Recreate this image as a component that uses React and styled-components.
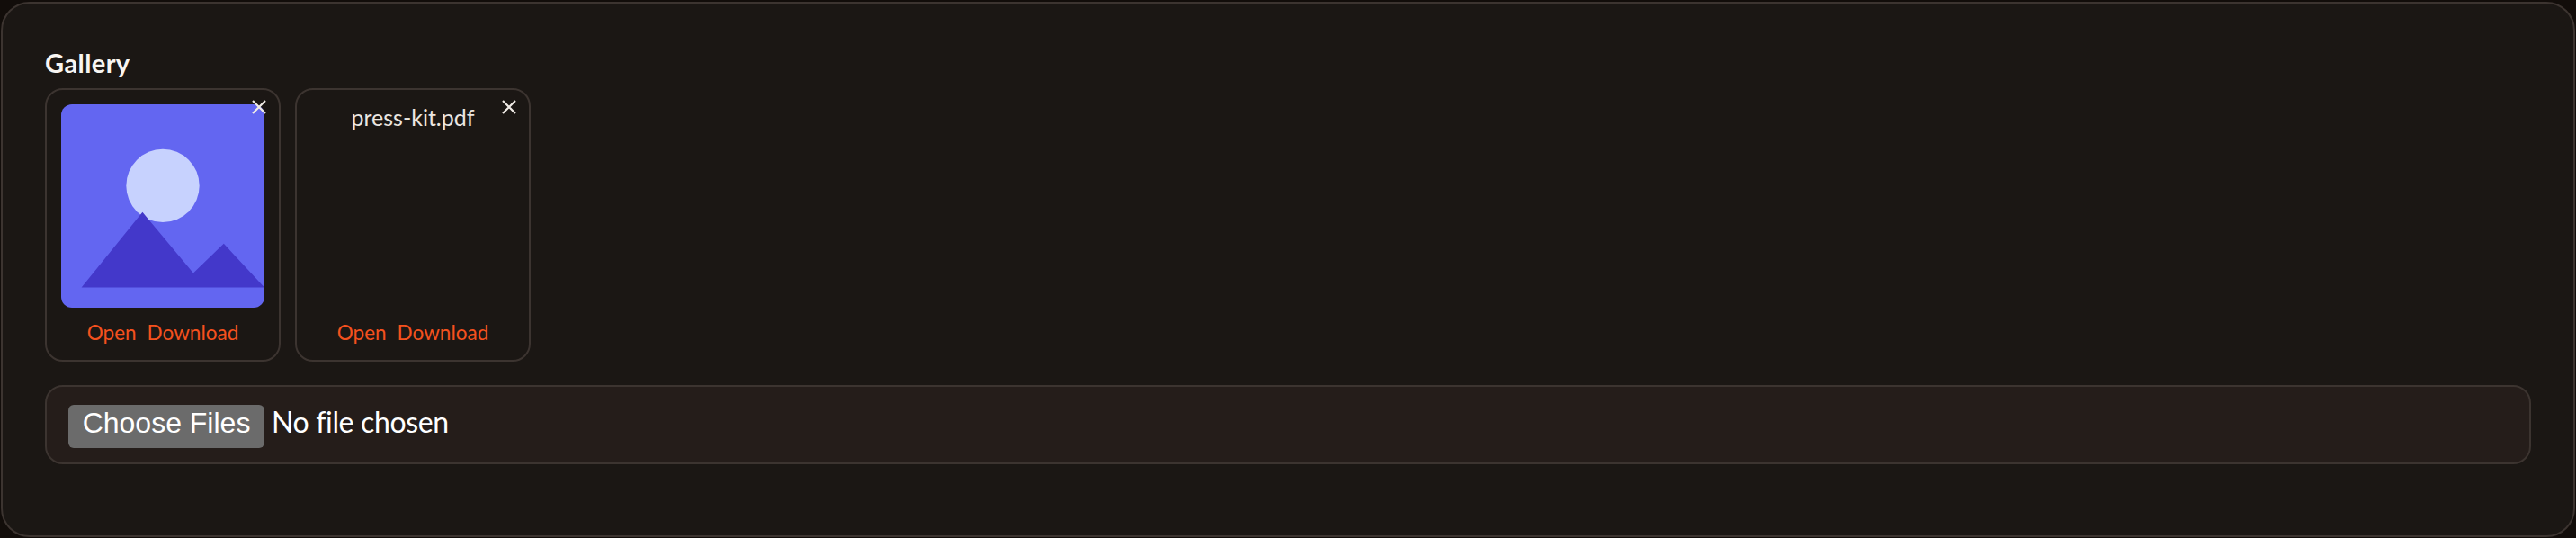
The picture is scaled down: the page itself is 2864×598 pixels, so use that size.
import React from "react";
import styled, { createGlobalStyle } from "styled-components";

const GlobalStyle = createGlobalStyle`
  html, body {
    margin: 0;
    padding: 0;
    background: #120d0a;
  }
  body {
    font-family: "Lato", "Liberation Sans", sans-serif;
  }
`;

const Page = styled.div`
  box-sizing: border-box;
  width: 2864px;
  height: 598px;
  padding: 2px 1px 1px;
`;

const Card = styled.section`
  box-sizing: border-box;
  height: 100%;
  padding: 48px 47px 0;
  background: #1b1714;
  border: 2px solid #3c3430;
  border-radius: 32px;
`;

const Title = styled.h2`
  margin: 0 0 10px;
  font-size: 29px;
  line-height: 36px;
  font-weight: 700;
  letter-spacing: 0.4px;
  color: #f8f5f2;
`;

const Tiles = styled.div`
  display: flex;
  gap: 16px;
`;

const Tile = styled.div`
  position: relative;
  box-sizing: border-box;
  width: 262px;
  height: 304px;
  padding: 16px;
  display: flex;
  flex-direction: column;
  align-items: center;
  border: 2px solid #3c3430;
  border-radius: 20px;
`;

const Thumb = styled.svg`
  display: block;
  width: 226px;
  height: 226px;
  border-radius: 12px;
`;

const FileName = styled.div`
  font-size: 25px;
  line-height: 28px;
  color: #ebe6e1;
`;

const Actions = styled.div`
  margin-top: auto;
  display: flex;
  gap: 12px;
  line-height: 28px;
`;

const ActionLink = styled.a`
  font-size: 22.5px;
  color: #f4511e;
  text-decoration: none;
`;

const CloseButton = styled.button`
  position: absolute;
  top: 10px;
  right: 13px;
  width: 18px;
  height: 18px;
  padding: 0;
  border: none;
  background: transparent;
  color: #f0ebe6;
  cursor: pointer;

  svg {
    display: block;
  }
`;

const UploadBox = styled.div`
  box-sizing: border-box;
  margin-top: 26px;
  height: 88px;
  padding: 15px 24px 18px;
  background: #251d1a;
  border: 2px solid #3c3430;
  border-radius: 20px;
`;

const FileInput = styled.input`
  display: block;
  font-family: "Lato", "Liberation Sans", sans-serif;
  font-size: 32px;
  line-height: 48px;
  letter-spacing: -0.35px;
  color: #ffffff;

  &::file-selector-button {
    box-sizing: border-box;
    height: 48px;
    width: 218px;
    margin-right: 8px;
    padding: 0 0 6px;
    border: none;
    border-radius: 6px;
    background: #6b6b6b;
    color: #ffffff;
    font-family: "Liberation Sans", sans-serif;
    font-size: 32px;
    letter-spacing: 0;
  }
`;

const CloseIcon = () => (
  <svg width="18" height="18" viewBox="0 0 18 18" fill="none" stroke="currentColor" strokeWidth="2.2">
    <path d="M2 2 L16 16 M16 2 L2 16" />
  </svg>
);

const MountainThumb = () => (
  <Thumb viewBox="0 0 100 100" role="img" aria-label="Gallery image">
    <rect width="100" height="100" fill="#6366f1" />
    <circle cx="50" cy="40" r="18" fill="#c7d2fe" />
    <path d="M10 90 L40 53 L65 83 L80 68.5 L100 90 Z" fill="#4338ca" />
  </Thumb>
);

const Links = () => (
  <Actions>
    <ActionLink href="#open">Open</ActionLink>
    <ActionLink href="#download">Download</ActionLink>
  </Actions>
);

const App = () => {
  return (
    <Page>
      <GlobalStyle />
      <Card>
        <Title>Gallery</Title>
        <Tiles>
          <Tile>
            <CloseButton aria-label="Remove"><CloseIcon /></CloseButton>
            <MountainThumb />
            <Links />
          </Tile>
          <Tile>
            <CloseButton aria-label="Remove"><CloseIcon /></CloseButton>
            <FileName>press-kit.pdf</FileName>
            <Links />
          </Tile>
        </Tiles>
        <UploadBox>
          <FileInput type="file" multiple />
        </UploadBox>
      </Card>
    </Page>
  );
};

export default App;
